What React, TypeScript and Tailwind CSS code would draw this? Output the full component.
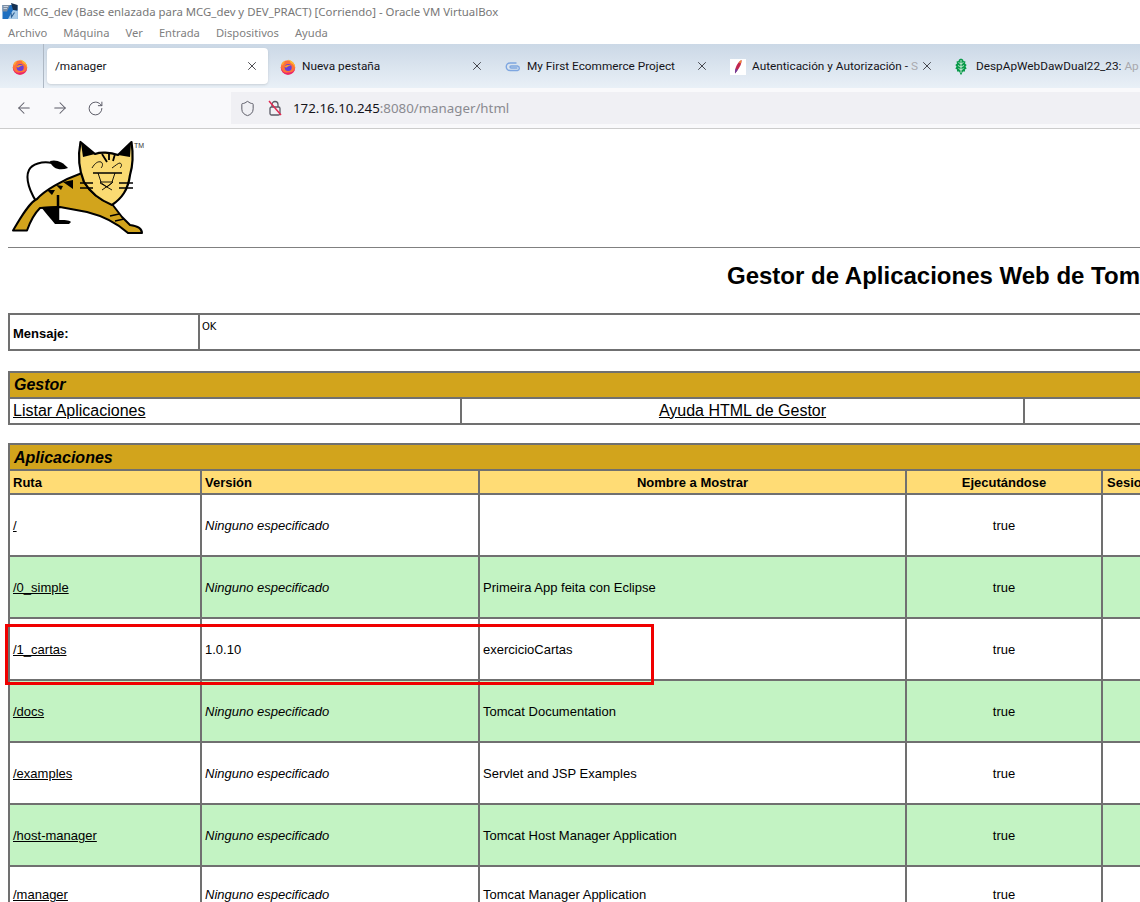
import { ArrowLeft, ArrowRight, RotateCw, Shield, X } from "lucide-react";

const apps = [
  { path: "/", version: "", name: "", green: false },
  { path: "/0_simple", version: "", name: "Primeira App feita con Eclipse", green: true },
  { path: "/1_cartas", version: "1.0.10", name: "exercicioCartas", green: false },
  { path: "/docs", version: "", name: "Tomcat Documentation", green: true },
  { path: "/examples", version: "", name: "Servlet and JSP Examples", green: false },
  { path: "/host-manager", version: "", name: "Tomcat Host Manager Application", green: true },
  { path: "/manager", version: "", name: "Tomcat Manager Application", green: false },
];

function FirefoxIcon() {
  return (
    <svg width="16" height="16" viewBox="0 0 16 16" className="mt-px shrink-0">
      <circle cx="8" cy="8.5" r="7.2" fill="#ff7139" />
      <path d="M0.8 8 A7.2 7.2 0 0 0 15.2 9 A7 7 0 0 1 8 13.5 A6 6 0 0 1 0.8 8Z" fill="#e9246f" />
      <path d="M8 0.8 C12 1.2 15.2 5 15.2 9 C14 6 12.4 4.5 10.5 4 C11 3 9.5 2 8 0.8Z" fill="#ffbd2e" />
      <path d="M1.3 5.5 C2 3.5 3.5 2.2 5 1.8 C4.6 3.4 4 4.6 2.8 6.4Z" fill="#ffa436" />
      <circle cx="8.2" cy="8.6" r="3.5" fill="#6a3fd6" />
      <path d="M4.6 7.4 C6 5.8 9 5.3 11.2 7 C9 6.8 7.2 7.2 6.6 8.6 C5.6 8.6 5 8 4.6 7.4Z" fill="#ff9a1f" />
    </svg>
  );
}

function LinkIcon() {
  return (
    <svg width="16" height="16" viewBox="0 0 16 16" fill="none" stroke="#7ea6e0" strokeWidth="1.4" className="mt-px shrink-0">
      <path d="M11 4 H5 A3.6 3.6 0 0 0 5 11.5 H12.5 A2.3 2.3 0 0 0 12.5 7 H6 A1 1 0 0 0 6 9 H12" strokeLinecap="round" />
    </svg>
  );
}

function FeatherIcon() {
  return (
    <svg width="16" height="16" viewBox="0 0 16 16" className="mt-px shrink-0">
      <rect width="16" height="16" fill="#ffffff" />
      <path d="M11.5 1 C12 4 10 8 7 12 L5 14.5 C4.5 10 7 3.5 11.5 1Z" fill="#c1264f" />
      <path d="M11.5 1 C11.5 2.5 11 3.5 10.5 4.5 L8.8 3.4 C9.6 2.2 10.6 1.5 11.5 1Z" fill="#f08a2c" />
      <path d="M7.6 10.8 L7 12 L5 14.5 C4.9 13 5.2 11 5.8 9.5Z" fill="#6b3fa0" />
    </svg>
  );
}

function LeafIcon() {
  return (
    <svg width="12" height="17" viewBox="0 0 12 17" className="mr-[3px] mt-px shrink-0">
      <path
        d="M6 0.5 L8 1.5 L8.5 3 L10.5 3.5 L10 5.5 L11.7 7 L10.5 8.5 L11.7 10.5 L10 11.5 L10 13.5 L8 13.5 L7 15 L6.7 16.5 L5.3 16.5 L5 15 L4 13.5 L2 13.5 L2 11.5 L0.3 10.5 L1.5 8.5 L0.3 7 L2 5.5 L1.5 3.5 L3.5 3 L4 1.5Z"
        fill="#0b9a4b"
      />
      <path d="M6 2 V15 M6 6 L3.5 4.5 M6 6 L8.5 4.5 M6 9 L3 7.5 M6 9 L9 7.5 M6 12 L3.5 10.5 M6 12 L8.5 10.5" stroke="#ffffff" strokeWidth="0.7" fill="none" />
    </svg>
  );
}

function VBoxIcon() {
  return (
    <svg width="16" height="18" viewBox="0 0 16 18">
      <rect x="0.5" y="3" width="15" height="14" fill="#1f6fc0" />
      <path d="M0.5 3 H8 L5 9.5 H0.5Z" fill="#7d8ea3" />
      <path d="M1.5 4.5 H6 M1.5 6.5 H5" stroke="#d8e2ee" strokeWidth="0.8" />
      <path d="M9 1 L15.5 3 V8.5 L11 8Z" fill="#16304f" />
      <path d="M6 17 L11 8 L15.5 9 V17Z" fill="#a9cbe8" />
      <path d="M9 11 L9.5 15 L12.5 10.5" stroke="#2a5f96" strokeWidth="1.1" fill="none" />
    </svg>
  );
}

function BrokenLock() {
  return (
    <svg width="16" height="18" viewBox="0 0 16 18" fill="none" className="block shrink-0">
      <path d="M5 8 V5.5 A3 3 0 0 1 11 5.5 V8" stroke="#5b5b66" strokeWidth="1.3" />
      <rect x="3" y="8" width="10" height="8" rx="1.5" stroke="#5b5b66" strokeWidth="1.3" />
      <path d="M2 2 L14 16" stroke="#e22850" strokeWidth="1.5" />
    </svg>
  );
}

function TomcatLogo() {
  return (
    <svg width="150" height="105" viewBox="8 5 150 105" className="block">
      <path d="M40 77 C29 62 25 48 29 40 C32 34 42 31 52 33" fill="none" stroke="#000" strokeWidth="2" />
      <path d="M50 31 C56 29 63 32 68 38 C60 41 52 39 50 31Z" fill="#000" />
      <path
        d="M13 100.5 C22 85 30 72 37 69 C44 61 62 50 82 43 L84 52 C90 62 100 70 112 74 L122 87 L130 95 C138 96 142 99 142 103 L128 103 C118 94 103 86 87 82 L60 77 L40 78 C34 84 30 92 27 100.5Z"
        fill="#d2a41c"
        stroke="#000"
        strokeWidth="2"
        strokeLinejoin="round"
      />
      <path d="M41 77 L58 76 L59 90 C64 90 69 90 71 92 L69 94 L55 94 C50 88 45 82 41 77Z" fill="#000" />
      <path d="M58 65 L58 90" stroke="#000" strokeWidth="2.5" fill="none" />
      <path d="M63 52 L73 50 L73 59Z M47 60 L55 60 L52 65Z M56 55 L63 56 L61 60Z" fill="#000" />
      <path d="M119 84 L110 86 M124 89 L115 91" stroke="#000" strokeWidth="1.5" />
      <path
        d="M80.5 12 C78 25 79 40 84 52 C90 62 100 70 112 75 C122 68 128 60 130 45 C133 35 133 22 131.5 12 L118 25 C110 22 100 22 95 24Z"
        fill="#fada72"
        stroke="#000"
        strokeWidth="2.2"
        strokeLinejoin="round"
      />
      <path d="M81 13 L95 24 L83 27Z M131 13 L118 25 L130 27Z" fill="#000" />
      <path d="M102 24 L107 32 M109 24 L109 30 M115 24 L113 31" stroke="#000" strokeWidth="1.8" fill="none" />
      <path d="M92 38 C95 33 98 31 101 32 C103 33 103 36 101 38 M112 38 C115 36 118 33 120 33 C122 34 122 36 120 38" stroke="#000" strokeWidth="0.9" fill="none" />
      <path d="M93 43 H122 M80 53 H93 M80 58 H93 M119 53 H133 M119 58 H133" stroke="#000" strokeWidth="1.7" />
      <path d="M100 52 H113 L107 57Z M102 60 L112 53 M100 53 L112 60 M98 43 L101 52 M115 43 L112 52" stroke="#000" strokeWidth="0.9" fill="none" />
      <text x="134" y="18" fontSize="7" fontFamily="Liberation Sans, sans-serif" fill="#333">TM</text>
    </svg>
  );
}

function Tab({ icon, label, fade, suffix }: { icon: React.ReactNode; label: string; fade?: boolean; suffix?: string }) {
  return (
    <div className="flex h-9 w-[221px] shrink-0 items-center pl-2 pr-[9px]">
      {icon}
      <span className="ml-[6px] flex-1 overflow-hidden whitespace-nowrap pt-[2px] text-[11.8px] text-[#15141a]">
        {label}
        {suffix && <span className="text-[#a8a8ae]">{suffix}</span>}
      </span>
      {!fade && <X size={14} strokeWidth={1.3} className="shrink-0 text-[#15141a]" />}
    </div>
  );
}

function App() {
  return (
    <div className="h-[902px] w-[1140px] overflow-hidden bg-white font-['Liberation_Sans',sans-serif] text-black">
      {/* ventana de VirtualBox */}
      <div className="flex h-[22px] items-center gap-[5px] pl-[2px] font-['Noto_Sans',sans-serif] text-[11.4px] text-[#777777]">
        <VBoxIcon />
        <span className="pt-px">MCG_dev (Base enlazada para MCG_dev y DEV_PRACT) [Corriendo] - Oracle VM VirtualBox</span>
      </div>
      <div className="flex h-[22px] items-center gap-4 pl-2 font-['Noto_Sans',sans-serif] text-[11.2px] text-[#808080]">
        <span>Archivo</span>
        <span>Máquina</span>
        <span>Ver</span>
        <span>Entrada</span>
        <span>Dispositivos</span>
        <span>Ayuda</span>
      </div>

      {/* firefox */}
      <div className="flex h-11 items-center overflow-hidden bg-gradient-to-b from-[#cbd8e6] to-[#e9f0f7] font-['Roboto',sans-serif]">
        <div className="flex h-11 w-11 shrink-0 items-center justify-center border-r border-[#aeb8c4] pr-[4px]">
          <FirefoxIcon />
        </div>
        <div className="ml-[3px] flex gap-1">
          <div className="flex h-9 w-[221px] shrink-0 items-center rounded bg-white pl-2 pr-[9px] shadow-sm">
            <span className="flex-1 pt-[2px] text-[11.8px] text-[#15141a]">/manager</span>
            <X size={14} strokeWidth={1.3} className="text-[#15141a]" />
          </div>
          <Tab icon={<FirefoxIcon />} label="Nueva pestaña" />
          <Tab icon={<LinkIcon />} label="My First Ecommerce Project" />
          <Tab icon={<FeatherIcon />} label="Autenticación y Autorización - " suffix="S" />
          <Tab icon={<LeafIcon />} label="DespApWebDawDual22_23: " suffix="Ap" fade />
        </div>
      </div>
      <div className="flex h-[41px] items-center border-b border-[#cccccc] bg-[#f9f9fb]">
        <div className="flex w-[231px] shrink-0 items-center gap-[18px] pl-[15px] text-[#5b5b66]">
          <ArrowLeft size={18} strokeWidth={1.4} />
          <ArrowRight size={18} strokeWidth={1.4} />
          <RotateCw size={17} strokeWidth={1.4} />
        </div>
        <div className="flex h-8 flex-1 items-center bg-[#f0f0f4] pl-2 font-['Noto_Sans',sans-serif] text-[13.3px] text-[#8a8a90]">
          <Shield size={17} strokeWidth={1.4} className="text-[#5b5b66]" />
          <span className="ml-[11px]">
            <BrokenLock />
          </span>
          <span className="ml-[10px] whitespace-nowrap pt-px">
            <span className="text-[#15141a]">172.16.10.245</span>:8080/manager/html
          </span>
        </div>
      </div>

      {/* pagina del manager */}
      <div className="relative w-[1900px] pl-[8px] text-[13px]">
        <div className="pt-[6px]">
          <TomcatLogo />
        </div>
        <hr className="mt-[7px] border-t border-[#808080]" />
        <h1 className="mt-[14px] h-[28px] pl-[719px] text-[24px] font-bold leading-[28px] whitespace-nowrap">
          Gestor de Aplicaciones Web de Tomcat
        </h1>

        <table className="mt-[23px] w-[1880px] table-fixed border-collapse border-2 border-[#707070]">
          <colgroup>
            <col className="w-[190px]" />
            <col />
          </colgroup>
          <tbody>
            <tr className="h-[36px]">
              <td className="border-2 border-[#707070] pl-[3px] pt-[3px] align-middle text-[13px] font-bold">Mensaje:</td>
              <td className="border-2 border-[#707070] pl-[2px] align-top font-['DejaVu_Sans',sans-serif] text-[10px] leading-[24px]">OK</td>
            </tr>
          </tbody>
        </table>

        <table className="mt-[20px] w-[1880px] table-fixed border-collapse border-2 border-[#707070]">
          <colgroup>
            <col className="w-[452px]" />
            <col className="w-[563px]" />
            <col />
          </colgroup>
          <tbody>
            <tr className="h-[26px] bg-[#d2a41c]">
              <td colSpan={3} className="border-2 border-[#707070] pl-[4px] text-[16px] font-bold italic">Gestor</td>
            </tr>
            <tr className="h-[26px] text-[16px]">
              <td className="border-2 border-[#707070] pl-[3px]"><a className="underline">Listar Aplicaciones</a></td>
              <td className="border-2 border-[#707070] text-center"><a className="underline">Ayuda HTML de Gestor</a></td>
              <td className="border-2 border-[#707070]"></td>
            </tr>
          </tbody>
        </table>

        <table className="mt-[18px] w-[1880px] table-fixed border-collapse border-2 border-[#707070]">
          <colgroup>
            <col className="w-[192px]" />
            <col className="w-[278px]" />
            <col className="w-[427px]" />
            <col className="w-[196px]" />
            <col />
          </colgroup>
          <tbody>
            <tr className="h-[26px] bg-[#d2a41c]">
              <td colSpan={5} className="border-2 border-[#707070] pl-[4px] pt-[2px] text-[16px] font-bold italic leading-[20px]">Aplicaciones</td>
            </tr>
            <tr className="h-[24px] bg-[#ffdc75] font-bold leading-[18px]">
              <td className="border-2 border-[#707070] pl-[3px] pt-[2px]">Ruta</td>
              <td className="border-2 border-[#707070] pl-[3px] pt-[2px]">Versión</td>
              <td className="border-2 border-[#707070] pt-[2px] text-center">Nombre a Mostrar</td>
              <td className="border-2 border-[#707070] pt-[2px] text-center">Ejecutándose</td>
              <td className="border-2 border-[#707070] pl-[4px] pt-[2px]">Sesiones</td>
            </tr>
            {apps.map((app) => (
              <tr key={app.path} className={app.path === "/manager" ? "h-[56px]" : "h-[62px]"}>
                <td className={`border-2 border-[#707070] pl-[3px] pt-[2px] ${app.green ? "bg-[#c3f3c3]" : "bg-white"}`}>
                  <a className="underline">{app.path}</a>
                </td>
                <td className={`border-2 border-[#707070] pl-[3px] pt-[2px] ${app.green ? "bg-[#c3f3c3]" : "bg-white"}`}>
                  {app.version || <i>Ninguno especificado</i>}
                </td>
                <td className={`border-2 border-[#707070] pl-[3px] pt-[2px] ${app.green ? "bg-[#c3f3c3]" : "bg-white"}`}>{app.name}</td>
                <td className={`border-2 border-[#707070] pt-[2px] text-center ${app.green ? "bg-[#c3f3c3]" : "bg-white"}`}>true</td>
                <td className={`border-2 border-[#707070] ${app.green ? "bg-[#c3f3c3]" : "bg-white"}`}></td>
              </tr>
            ))}
          </tbody>
        </table>

        {/* marca roja sobre la captura */}
        <div className="absolute left-[5px] top-[495px] h-[61px] w-[649px] border-[3px] border-[#f00000]" />
      </div>
    </div>
  );
}

export default App;
